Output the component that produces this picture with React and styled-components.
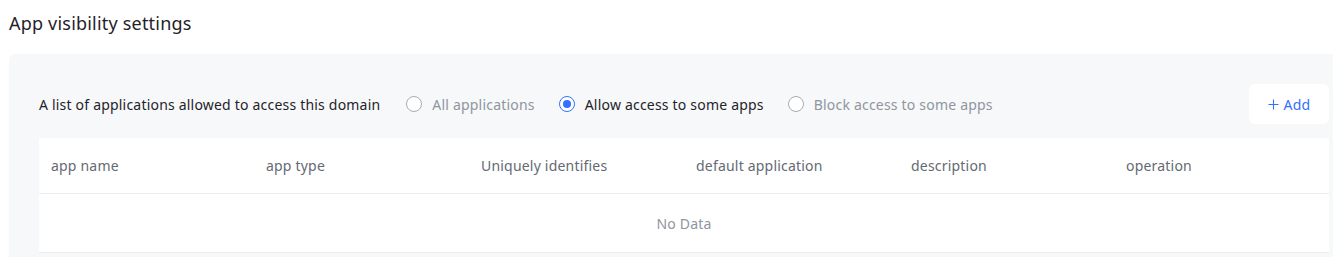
import React, { useState } from "react";
import styled, { createGlobalStyle } from "styled-components";

const GlobalStyle = createGlobalStyle`
  body {
    margin: 0;
    overflow: hidden;
    background: #ffffff;
    font-family: "Noto Sans", "Open Sans", "Liberation Sans", sans-serif;
    letter-spacing: 0.2px;
    color: #1f2329;
  }
`;

const Page = styled.div`
  width: 1350px;
  padding: 10px 0 0 9px;
`;

const Title = styled.h2`
  font-size: 18px;
  font-weight: 400;
  line-height: 26px;
  margin: 0 0 18px 0;
  color: #1f2329;
`;

const Panel = styled.div`
  background: #f7f8fa;
  border-radius: 6px 0 0 0;
  padding: 30px 30px 8px 30px;
`;

const Toolbar = styled.div`
  display: flex;
  align-items: center;
  height: 40px;
  margin-bottom: 14px;
`;

const FieldLabel = styled.span`
  font-size: 14px;
  margin-right: 26px;
  color: #1f2329;
`;

const RadioGroup = styled.div`
  display: flex;
  align-items: center;
  gap: 24px;
`;

const RadioItem = styled.label`
  display: flex;
  align-items: center;
  gap: 10px;
  font-size: 14px;
  cursor: pointer;
  color: ${(p) => (p.$checked ? "#1f2329" : "#8f959e")};
`;

const RadioCircle = styled.span`
  box-sizing: border-box;
  width: 16px;
  height: 16px;
  border-radius: 50%;
  border: 1px solid ${(p) => (p.$checked ? "#3370ff" : "#a8adb5")};
  background: #fff;
  display: flex;
  align-items: center;
  justify-content: center;
  &::after {
    content: "";
    width: 8px;
    height: 8px;
    border-radius: 50%;
    background: #3370ff;
    display: ${(p) => (p.$checked ? "block" : "none")};
  }
`;

const AddButton = styled.button`
  margin-left: auto;
  width: 80px;
  height: 40px;
  border: none;
  border-radius: 6px;
  background: #ffffff;
  color: #3370ff;
  font-family: inherit;
  letter-spacing: inherit;
  font-size: 14px;
  display: flex;
  align-items: center;
  justify-content: center;
  gap: 5px;
  cursor: pointer;
`;

const Table = styled.div`
  background: #ffffff;
`;

const HeaderRow = styled.div`
  display: grid;
  grid-template-columns: repeat(6, 215px);
  height: 56px;
  align-items: center;
  border-bottom: 1px solid #ebedf0;
  box-sizing: border-box;
`;

const HeaderCell = styled.div`
  padding-left: 12px;
  font-size: 14px;
  color: #646a73;
`;

const EmptyRow = styled.div`
  height: 59px;
  box-sizing: border-box;
  border-bottom: 1px solid #ebedf0;
  display: flex;
  align-items: center;
  justify-content: center;
  font-size: 14px;
  color: #8f959e;
`;

const PlusIcon = () => (
  <svg width="11" height="11" viewBox="0 0 11 11" fill="none">
    <path d="M5.5 0.5v10M0.5 5.5h10" stroke="#3370ff" strokeWidth="1.1" />
  </svg>
);

const options = [
  "All applications",
  "Allow access to some apps",
  "Block access to some apps",
];

const columns = [
  "app name",
  "app type",
  "Uniquely identifies",
  "default application",
  "description",
  "operation",
];

export default function App() {
  const [selected, setSelected] = useState(1);
  return (
    <Page>
      <GlobalStyle />
      <Title>App visibility settings</Title>
      <Panel>
        <Toolbar>
          <FieldLabel>A list of applications allowed to access this domain</FieldLabel>
          <RadioGroup>
            {options.map((o, i) => (
              <RadioItem key={o} $checked={selected === i} onClick={() => setSelected(i)}>
                <RadioCircle $checked={selected === i} />
                {o}
              </RadioItem>
            ))}
          </RadioGroup>
          <AddButton>
            <PlusIcon />
            Add
          </AddButton>
        </Toolbar>
        <Table>
          <HeaderRow>
            {columns.map((c) => (
              <HeaderCell key={c}>{c}</HeaderCell>
            ))}
          </HeaderRow>
          <EmptyRow>No Data</EmptyRow>
        </Table>
      </Panel>
    </Page>
  );
}
